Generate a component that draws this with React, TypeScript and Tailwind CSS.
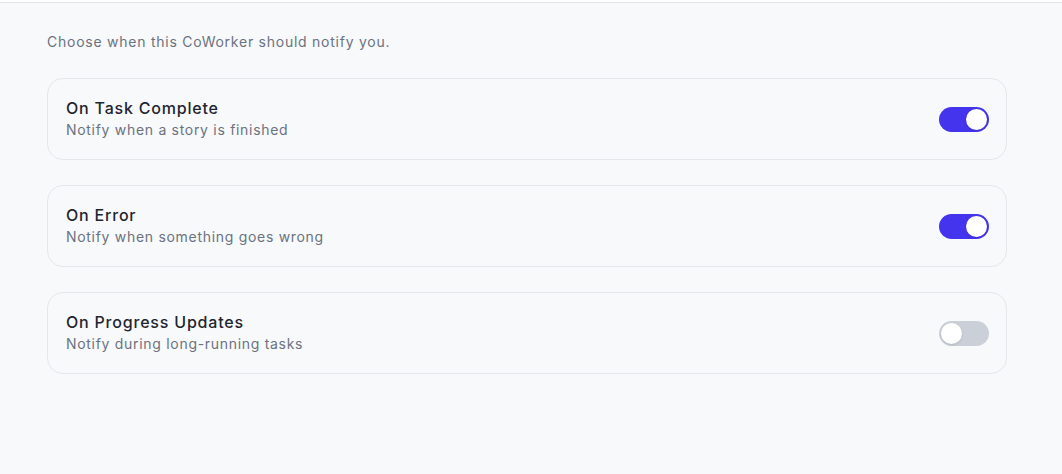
import React, { useState } from 'react';

interface ToggleProps {
  checked: boolean;
  onChange: (v: boolean) => void;
}

const Toggle: React.FC<ToggleProps> = ({ checked, onChange }) => {
  return (
    <button
      type="button"
      role="switch"
      aria-checked={checked}
      onClick={() => onChange(!checked)}
      className={`relative inline-flex h-[25px] w-[50px] shrink-0 items-center rounded-full transition-colors ${
        checked ? 'bg-[#4434ee]' : 'bg-[#cbd0d8]'
      }`}
    >
      <span
        className={`inline-block h-[21px] w-[21px] rounded-full bg-white shadow-sm transition-transform ${
          checked ? 'translate-x-[27px]' : 'translate-x-[2px]'
        }`}
      />
    </button>
  );
};

const rows = [
  { title: 'On Task Complete', desc: 'Notify when a story is finished', on: true },
  { title: 'On Error', desc: 'Notify when something goes wrong', on: true },
  { title: 'On Progress Updates', desc: 'Notify during long-running tasks', on: false },
];

export default function App() {
  const [state, setState] = useState(rows.map((r) => r.on));

  return (
    <div className="min-h-[474px] w-full bg-[#f8f9fb] font-['Inter',sans-serif]">
      <div className="h-[2px] bg-white" />
      <div className="border-t border-[#e3e5ea] px-[47px] pt-[29px]">
        <p className="text-[14px] leading-[20px] tracking-[0.75px] text-[#6b7280]">
          Choose when this CoWorker should notify you.
        </p>
        <div className="mt-[26px] flex w-[960px] flex-col gap-[25px]">
          {rows.map((r, i) => (
            <div
              key={r.title}
              className="flex h-[82px] items-center justify-between rounded-[16px] border border-[#e5e7eb] bg-[#f8f9fb] pl-[18px] pr-[17px]"
            >
              <div className="flex flex-col">
                <span className="text-[16px] font-medium leading-[20px] tracking-[0.8px] text-[#1f2530]">
                  {r.title}
                </span>
                <span className="mt-[2px] text-[14px] leading-[20px] tracking-[0.7px] text-[#6b7280]">
                  {r.desc}
                </span>
              </div>
              <Toggle
                checked={state[i]}
                onChange={(v) => setState((s) => s.map((x, j) => (j === i ? v : x)))}
              />
            </div>
          ))}
        </div>
      </div>
    </div>
  );
}
